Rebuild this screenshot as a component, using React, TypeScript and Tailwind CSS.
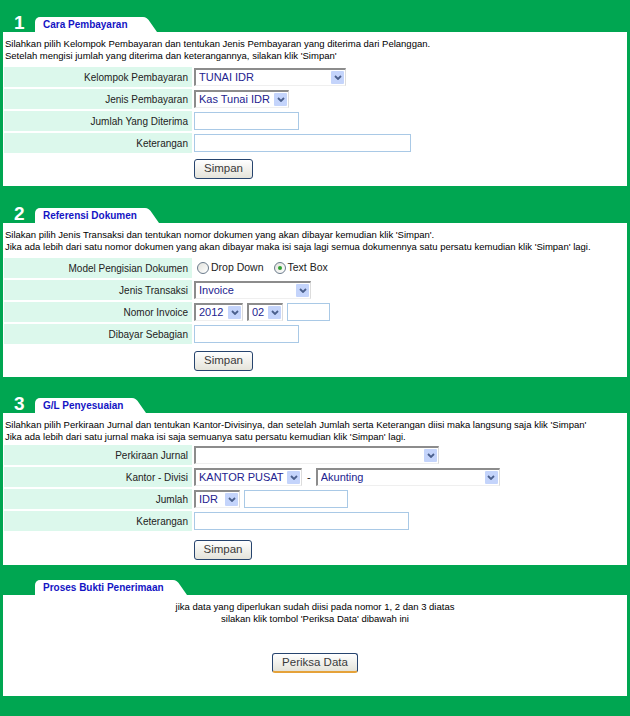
import { ReactNode } from 'react';

// Windows-XP era form page: green frame, white panels with tab headers

function Chevron() {
    return (
        <svg width="8" height="5" viewBox="0 0 8 5">
            <path d="M1 1 L4 4 L7 1" fill="none" stroke="#4a5f8c" strokeWidth="1.8" />
        </svg>
    );
}

function Select({ value, className }: { value?: string; className: string }) {
    return (
        <div
            className={`${className} h-[18px] flex items-center bg-white border-t-2 border-l-2 border-r border-b border-t-[#8c8c8c] border-l-[#8c8c8c] border-r-[#dcdcdc] border-b-[#efefef] pl-[3px] pr-[1px]`}
        >
            <span className="flex-1 text-[11px] leading-none text-[#23238f] whitespace-nowrap overflow-hidden">{value}</span>
            <span className="w-[13px] h-[13px] bg-[#c4d4fb] rounded-[1px] flex items-center justify-center">
                <Chevron />
            </span>
        </div>
    );
}

function TextInput({ className }: { className: string }) {
    return <div className={`${className} h-[18px] bg-white border border-[#a9c9e6]`} />;
}

function Radio({ checked }: { checked?: boolean }) {
    return (
        <span className="w-[12px] h-[12px] rounded-full border border-[#6b7b8c] bg-linear-to-br from-[#e2e2dc] to-white flex items-center justify-center">
            {checked && <span className="w-[4px] h-[4px] rounded-full bg-[#2fa12f]" />}
        </span>
    );
}

function Button({ label, className }: { label: string; className: string }) {
    return (
        <button
            className={`${className} block h-[20px] rounded-[3px] border border-[#27446e] bg-linear-to-b from-white to-[#e4e3da] text-[11.5px] leading-none font-normal text-[#3a3a3a]`}
        >
            {label}
        </button>
    );
}

function Row({ label, children }: { label: string; children?: ReactNode }) {
    return (
        <div className="flex h-[20px] gap-[2px]">
            <div className="w-[188px] bg-[#dcf8ec] flex items-center justify-end pr-[4px] text-[10px] text-[#222] whitespace-nowrap">
                {label}
            </div>
            <div className="flex items-center gap-[4px]">{children}</div>
        </div>
    );
}

function Header({ num, title, tabW }: { num?: string; title: string; tabW: string }) {
    return (
        <div className="flex items-start h-[15px]">
            <div className="w-[32px] pl-[11px] text-[19px] leading-[11px] font-bold text-white">{num}</div>
            <div className="flex h-[15px]">
                <div className={`${tabW} bg-white rounded-tl-[5px] pl-[8px] pt-[1px] text-[10px] leading-[14px] font-bold text-[#1414c4] whitespace-nowrap`}>
                    {title}
                </div>
                <svg width="14" height="15" viewBox="0 0 14 15" className="block">
                    <path d="M0 0 Q4 0 7 5 L14 15 L0 15 Z" fill="white" />
                </svg>
            </div>
        </div>
    );
}

function Desc({ lines }: { lines: string[] }) {
    return (
        <div className="pl-[2px] text-[9.5px] leading-[12px] text-black">
            {lines.map((l) => (
                <div key={l} className="whitespace-nowrap">{l}</div>
            ))}
        </div>
    );
}

export default function App() {
    return (
        <div className="w-[630px] min-h-[716px] bg-[#00a651] px-[3px] pb-[21px] font-['Liberation_Sans',Arial,sans-serif]">
            {/* 1. Cara Pembayaran */}
            <section className="pt-[17px]">
                <Header num="1" title="Cara Pembayaran" tabW="w-[108px]" />
                <div className="bg-white pt-[6px] pb-[7px]">
                    <Desc
                        lines={[
                            'Silahkan pilih Kelompok Pembayaran dan tentukan Jenis Pembayaran yang diterima dari Pelanggan.',
                            "Setelah mengisi jumlah yang diterima dan keterangannya, silakan klik 'Simpan'",
                        ]}
                    />
                    <div className="mt-[5px] px-[1px] flex flex-col gap-[2px]">
                        <Row label="Kelompok Pembayaran">
                            <Select value="TUNAI IDR" className="w-[152px]" />
                        </Row>
                        <Row label="Jenis Pembayaran">
                            <Select value="Kas Tunai IDR" className="w-[95px]" />
                        </Row>
                        <Row label="Jumlah Yang Diterima">
                            <TextInput className="w-[105px]" />
                        </Row>
                        <Row label="Keterangan">
                            <TextInput className="w-[217px]" />
                        </Row>
                    </div>
                    <div className="mt-[6px] pl-[191px] flex">
                        <Button label="Simpan" className="w-[59px]" />
                    </div>
                </div>
            </section>

            {/* 2. Referensi Dokumen */}
            <section className="pt-[22px]">
                <Header num="2" title="Referensi Dokumen" tabW="w-[110px]" />
                <div className="bg-white pt-[6px] pb-[6px]">
                    <Desc
                        lines={[
                            "Silakan pilih Jenis Transaksi dan tentukan nomor dokumen yang akan dibayar kemudian klik 'Simpan'.",
                            "Jika ada lebih dari satu nomor dokumen yang akan dibayar maka isi saja lagi semua dokumennya satu persatu kemudian klik 'Simpan' lagi.",
                        ]}
                    />
                    <div className="mt-[5px] px-[1px] flex flex-col gap-[2px]">
                        <Row label="Model Pengisian Dokumen">
                            <div className="flex items-center gap-[2px] pl-[3px] text-[10.5px] text-[#222]">
                                <Radio />
                                <span className="mr-[8px]">Drop Down</span>
                                <Radio checked />
                                <span>Text Box</span>
                            </div>
                        </Row>
                        <Row label="Jenis Transaksi">
                            <Select value="Invoice" className="w-[117px]" />
                        </Row>
                        <Row label="Nomor Invoice">
                            <Select value="2012" className="w-[49px]" />
                            <Select value="02" className="w-[36px]" />
                            <TextInput className="w-[43px]" />
                        </Row>
                        <Row label="Dibayar Sebagian">
                            <TextInput className="w-[105px]" />
                        </Row>
                    </div>
                    <div className="mt-[7px] pl-[191px] flex">
                        <Button label="Simpan" className="w-[59px]" />
                    </div>
                </div>
            </section>

            {/* 3. G/L Penyesuaian */}
            <section className="pt-[21px]">
                <Header num="3" title="G/L Penyesuaian" tabW="w-[97px]" />
                <div className="bg-white pt-[6px] pb-[5px]">
                    <Desc
                        lines={[
                            "Silahkan pilih Perkiraan Jurnal dan tentukan Kantor-Divisinya, dan setelah Jumlah serta Keterangan diisi maka langsung saja klik 'Simpan'",
                            "Jika ada lebih dari satu jurnal maka isi saja semuanya satu persatu kemudian klik 'Simpan' lagi.",
                        ]}
                    />
                    <div className="mt-[2px] px-[1px] flex flex-col gap-[2px]">
                        <Row label="Perkiraan Jurnal">
                            <Select className="w-[245px]" />
                        </Row>
                        <Row label="Kantor - Divisi">
                            <Select value="KANTOR PUSAT" className="w-[108px]" />
                            <span className="text-[11px] text-[#222] px-[1px]">-</span>
                            <Select value="Akunting" className="w-[184px]" />
                        </Row>
                        <Row label="Jumlah">
                            <Select value="IDR" className="w-[46px]" />
                            <TextInput className="w-[104px]" />
                        </Row>
                        <Row label="Keterangan">
                            <TextInput className="w-[215px]" />
                        </Row>
                    </div>
                    <div className="mt-[9px] pl-[191px] flex">
                        <Button label="Simpan" className="w-[58px]" />
                    </div>
                </div>
            </section>

            {/* Proses Bukti Penerimaan */}
            <section className="pt-[15px]">
                <Header title="Proses Bukti Penerimaan" tabW="w-[138px]" />
                <div className="bg-white pt-[6px] pb-[23px] flex flex-col items-center">
                    <div className="text-[9.5px] leading-[12px] text-black text-center">
                        <div>jika data yang diperlukan sudah diisi pada nomor 1, 2 dan 3 diatas</div>
                        <div>silakan klik tombol 'Periksa Data' dibawah ini</div>
                    </div>
                    <Button label="Periksa Data" className="mt-[28px] w-[86px] border-b-2 border-b-[#e5a23a]" />
                </div>
            </section>
        </div>
    );
}
